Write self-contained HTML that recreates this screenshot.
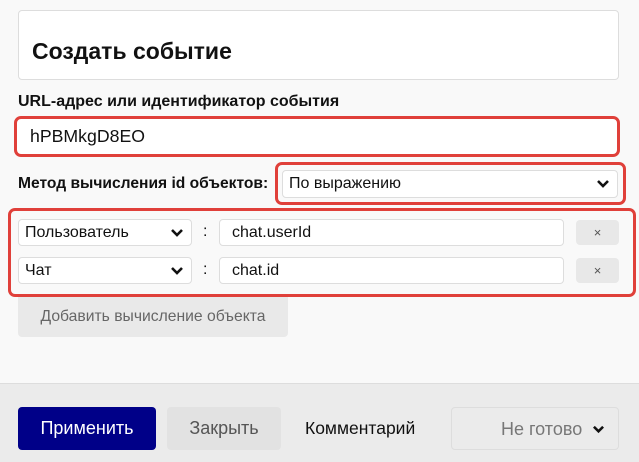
<!DOCTYPE html>
<html><head><meta charset="utf-8"><style>
*{box-sizing:border-box;margin:0;padding:0}
body{width:639px;height:462px;background:#f9f9f9;font-family:"Liberation Sans",sans-serif;position:relative;overflow:hidden;color:#111}
.a{position:absolute}
.red{position:absolute;border:3px solid #e0403a;border-radius:7px}
.sel{position:absolute;background:#fff;border:1px solid #ddd;border-radius:4px;font-size:16px;display:flex;align-items:center;padding-left:6px}
.chev{position:absolute;right:7px;top:50%;margin-top:-6px}
.inp{position:absolute;background:#fff;border:1px solid #ddd;border-radius:4px;font-size:16px;display:flex;align-items:center;padding-left:12px}
.xb{position:absolute;background:#e8e8e8;border-radius:4px;font-size:13px;color:#555;display:flex;align-items:center;justify-content:center}
</style></head><body>
<div class="a" style="left:18px;top:10px;width:601px;height:70px;background:#fff;border:1px solid #ddd;border-radius:4px;font-size:23px;font-weight:bold;padding:29px 0 0 13px;line-height:1">Создать событие</div>
<div class="a" style="left:18px;top:93px;font-size:16px;font-weight:bold">URL-адрес или идентификатор события</div>
<div class="red" style="left:14px;top:116px;width:606px;height:41px;background:#fff"></div>
<div class="a" style="left:30px;top:126px;font-size:17.7px">hPBMkgD8EO</div>
<div class="a" style="left:18px;top:175px;font-size:15.6px;font-weight:bold">Метод вычисления id объектов:</div>
<div class="red" style="left:275px;top:162px;width:351px;height:43px"></div>
<div class="sel" style="left:282px;top:170px;width:336px;height:28px">По выражению<svg class="chev" width="14" height="12" viewBox="0 0 14 12"><path d="M2 3l5 5 5-5" stroke="#111" stroke-width="2.6" fill="none"/></svg></div>
<div class="red" style="left:8px;top:208px;width:628px;height:89px"></div>
<div class="sel" style="left:18px;top:219px;width:174px;height:27px">Пользователь<svg class="chev" width="14" height="12" viewBox="0 0 14 12"><path d="M2 3l5 5 5-5" stroke="#111" stroke-width="2.6" fill="none"/></svg></div>
<div class="a" style="left:203px;top:223px;font-size:16px">:</div>
<div class="inp" style="left:219px;top:219px;width:345px;height:27px">chat.userId</div>
<div class="xb" style="left:576px;top:220px;width:43px;height:25px">×</div>
<div class="sel" style="left:18px;top:257px;width:174px;height:27px">Чат<svg class="chev" width="14" height="12" viewBox="0 0 14 12"><path d="M2 3l5 5 5-5" stroke="#111" stroke-width="2.6" fill="none"/></svg></div>
<div class="a" style="left:203px;top:261px;font-size:16px">:</div>
<div class="inp" style="left:219px;top:257px;width:345px;height:27px">chat.id</div>
<div class="xb" style="left:576px;top:258px;width:43px;height:25px">×</div>
<div class="a" style="left:18px;top:297px;width:270px;height:40px;background:#e9e9e9;border-radius:0 0 4px 4px;color:#666;font-size:15.7px;display:flex;align-items:center;justify-content:center">Добавить вычисление объекта</div>
<div class="a" style="left:0;top:383px;width:639px;height:79px;background:#ebebeb;border-top:1px solid #ddd"></div>
<div class="a" style="left:18px;top:407px;width:138px;height:43px;background:#000088;border-radius:4px;color:#fff;font-size:18px;display:flex;align-items:center;justify-content:center">Применить</div>
<div class="a" style="left:167px;top:407px;width:114px;height:43px;background:#e2e2e2;border-radius:4px;color:#555;font-size:18px;display:flex;align-items:center;justify-content:center">Закрыть</div>
<div class="a" style="left:305px;top:418px;font-size:17.5px">Комментарий</div>
<div class="a" style="left:451px;top:407px;width:168px;height:43px;border:1px solid #ddd;border-radius:4px;color:#777;font-size:18px;padding:11px 0 0 49px">Не готово<svg style="position:absolute;right:13px;top:16px" width="13" height="11" viewBox="0 0 14 12"><path d="M2 3l5 5 5-5" stroke="#111" stroke-width="2.8" fill="none"/></svg></div>
</body></html>
